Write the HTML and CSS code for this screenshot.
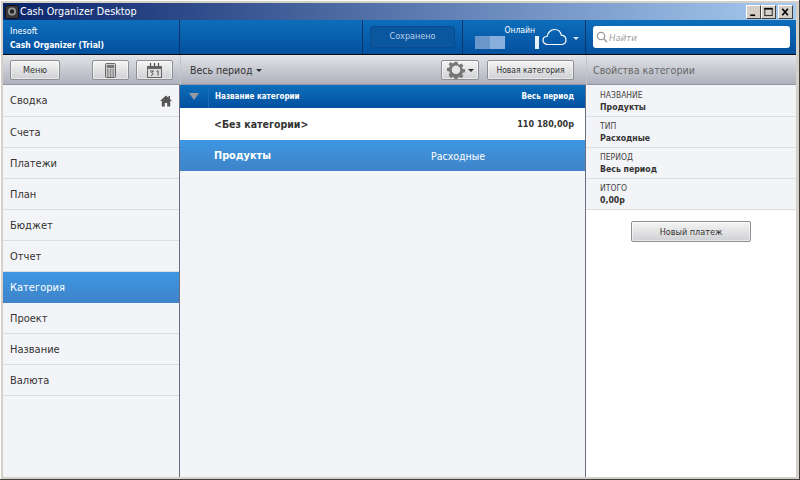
FILE: index.html
```html
<!DOCTYPE html>
<html lang="ru">
<head>
<meta charset="utf-8">
<title>Cash Organizer Desktop</title>
<link rel="stylesheet" href="styles.css">
</head>
<body>
<div class="window">
  <div class="titlebar">
    <svg class="appicon" width="14" height="14" viewBox="0 0 14 14"><rect x="0.5" y="0.5" width="13" height="13" rx="2" fill="#3a3a3a" stroke="#111"/><circle cx="7" cy="6.5" r="4" fill="#999"/><circle cx="7" cy="6.5" r="2.2" fill="#222"/></svg>
    <span class="title-text">Cash Organizer Desktop</span>
    <div class="winbtns">
      <div class="winbtn"><svg width="16" height="14" viewBox="0 0 16 14"><rect x="4" y="10" width="6" height="2" fill="#000"/></svg></div>
      <div class="winbtn"><svg width="16" height="14" viewBox="0 0 16 14"><rect x="3.5" y="2.5" width="9" height="9" fill="none" stroke="#000"/><rect x="3" y="2" width="10" height="2" fill="#000"/></svg></div>
      <div class="winbtn close"><svg width="16" height="14" viewBox="0 0 16 14"><path d="M4 3l7 8M11 3l-7 8" stroke="#000" stroke-width="2"/></svg></div>
    </div>
  </div>

  <div class="header">
    <div class="brand"><div>Inesoft</div><div class="brand-name">Cash Organizer (Trial)</div></div>
    <div class="head-mid"><div class="saved-cell"><div class="saved">Сохранено</div></div></div>
    <div class="status">
      <div class="bars"><span class="online">Онлайн</span><div class="barline"><i class="b1"></i><i class="b2"></i><i class="b3"></i></div></div>
      <svg class="cloud" width="25" height="18" viewBox="0 0 25 18"><path d="M6 16.5C3 16.5 1 14.700 1 12.300 1 10 2.800 8.500 5 8.500 5.700 4.500 9 1.500 12.500 1.500 16 1.500 18.700 4 19.300 7.200 22 7.500 24 9.500 24 12 24 14.700 22 16.500 19 16.500Z" fill="none" stroke="#fff" stroke-width="1.200"/></svg>
      <span class="caret-white"></span>
    </div>
    <div class="searchcell">
      <div class="search">
        <svg width="12" height="12" viewBox="0 0 12 12"><circle cx="5" cy="5" r="3.700" fill="none" stroke="#999" stroke-width="1.200"/><path d="M7.800 7.800L11 11" stroke="#999" stroke-width="1.600"/></svg>
        <span>Найти</span>
      </div>
    </div>
  </div>

  <div class="toolbar">
    <div class="tb-left">
      <button class="btn menu-btn">Меню</button>
      <div class="tb-icons">
        <button class="btn icon-btn"><svg width="11" height="15" viewBox="0 0 11 15"><rect x="0.500" y="0.500" width="10" height="14" rx="1" fill="#ccc" stroke="#666"/><rect x="2" y="2" width="7" height="3" fill="#777"/><path d="M2 7h1.500M4.800 7h1.500M7.500 7H9M2 9h1.500M4.800 9h1.500M7.500 9H9M2 11h1.500M4.800 11h1.500M7.500 11H9M2 13h1.500M4.800 13h1.500M7.500 13H9" stroke="#555" stroke-width="1.200"/></svg></button>
        <button class="btn icon-btn"><svg width="15" height="15" viewBox="0 0 15 15"><rect x="0.500" y="3.500" width="14" height="11" fill="#ddd" stroke="#666"/><rect x="0" y="3" width="15" height="3" fill="#666"/><path d="M3.500 0v4M7.500 0v4M11.500 0v4" stroke="#555" stroke-width="1.200"/><path d="M3 8h3.500l-2 1.500c2 0 2 3-.5 3M9.500 8.500l1.500-.8v5" fill="none" stroke="#555"/></svg></button>
      </div>
    </div>
    <div class="tb-mid">
      <div class="period">Весь период<span class="caret-dark"></span></div>
      <div class="tb-actions">
        <button class="btn gear-btn"><svg width="18" height="18" viewBox="0 0 18 18"><path d="M7.500 1h3l.4 2.300 1.500.6 1.900-1.300 2.100 2.100-1.300 1.900.6 1.500 2.300.4v3l-2.300.4-.6 1.500 1.300 1.900-2.100 2.100-1.900-1.300-1.500.6-.4 2.300h-3l-.4-2.300-1.500-.6-1.900 1.300L1.600 14l1.300-1.900-.6-1.500L0 10.200v-3l2.300-.4.6-1.500L1.600 3.400 3.700 1.300l1.900 1.300 1.500-.6Z" transform="translate(0 -.2)" fill="#777"/><circle cx="9" cy="8.700" r="4.300" fill="#e6e6e6"/></svg><span class="caret-dark"></span></button>
        <button class="btn new-btn">Новая категория</button>
      </div>
    </div>
    <div class="tb-right">Свойства категории</div>
  </div>

  <div class="main">
    <nav class="side">
      <div class="nav-item">Сводка<svg width="12" height="12" viewBox="0 0 12 12"><path d="M6 0.500L0 6h1.800v5.500h3V8h2.400v3.500h3V6H12L10 4.200V1H8.500v1.800Z" fill="#555"/></svg></div>
      <div class="nav-item">Счета</div>
      <div class="nav-item">Платежи</div>
      <div class="nav-item">План</div>
      <div class="nav-item">Бюджет</div>
      <div class="nav-item">Отчет</div>
      <div class="nav-item active">Категория</div>
      <div class="nav-item">Проект</div>
      <div class="nav-item">Название</div>
      <div class="nav-item">Валюта</div>
    </nav>
    <section class="content">
      <div class="thead">
        <div class="th-arrow"><span class="tri"></span></div>
        <div class="th-name">Название категории</div>
        <div class="th-sum">Весь период</div>
      </div>
      <div class="row plain"><span class="r-name">&lt;Без категории&gt;</span><span class="r-sum">110 180,00р</span></div>
      <div class="row selected"><span class="r-name">Продукты</span><span class="r-type">Расходные</span></div>
    </section>
    <aside class="props">
      <div class="prop"><div class="p-label">НАЗВАНИЕ</div><div class="p-val">Продукты</div></div>
      <div class="prop"><div class="p-label">ТИП</div><div class="p-val">Расходные</div></div>
      <div class="prop"><div class="p-label">ПЕРИОД</div><div class="p-val">Весь период</div></div>
      <div class="prop"><div class="p-label">ИТОГО</div><div class="p-val">0,00р</div></div>
      <div class="props-foot"><button class="btn pay-btn">Новый платеж</button></div>
    </aside>
  </div>
</div>
</body>
</html>
```

FILE: styles.css
```css
* { box-sizing: border-box; }
html, body { margin: 0; padding: 0; height: 100%; overflow: hidden; }
body { font-family: "DejaVu Sans Condensed", "Noto Sans", sans-serif; font-size: 11px; color: #333; }

.window {
  width: 800px; height: 480px;
  background: #d4d0c8;
  padding: 3px 3px 2px 3px;
  border-right: 1px solid #404040;
  border-bottom: 1px solid #404040;
  box-shadow: inset 1px 1px 0 #fff;
  display: flex; flex-direction: column;
}

.titlebar {
  height: 17px; flex: none;
  background: linear-gradient(90deg, #0a246a, #a6caf0);
  display: flex; align-items: center;
  padding-left: 2px;
  color: #fff;
}
.appicon { flex: none; }
.title-text { margin-left: 1px; font-size: 10.700px; }
.winbtns { margin-left: auto; display: flex; padding-right: 3px; }
.winbtn {
  width: 15px; height: 14px; overflow: hidden;
  background: #d4d0c8;
  border: 1px solid; border-color: #fff #404040 #404040 #fff;
  display: flex; align-items: center; justify-content: center;
}
.winbtn.close { margin-left: 2px; }

.header {
  height: 35px; flex: none;
  background: linear-gradient(180deg, #0c6ebb, #04509f);
  border-bottom: 1px solid #050a14;
  color: #fff;
  display: grid; grid-template-columns: 177px 283px 123px 1fr;
}
.brand {
  border-right: 1px solid #0a3468;
  padding: 5px 0 0 7px;
  font-size: 9px; line-height: 13px;
}
.brand-name { font-weight: 700; margin-top: 1px; font-size: 8.500px; }
.head-mid { display: flex; justify-content: flex-end; border-right: 1px solid #0a3468; }
.saved-cell { width: 100px; border-left: 1px solid #0a3468; padding: 6px 7px 0 7px; }
.saved {
  height: 22px; line-height: 19px; text-align: center;
  border: 1px solid #0c4a8e; border-radius: 3px;
  background: #0a569f;
  color: #bcd0e8; font-size: 9px;
}
.status { display: flex; align-items: flex-start; border-right: 1px solid #0a3468; padding: 3px 0 0 12px; }
.bars { width: 65px; display: flex; flex-direction: column; align-items: flex-end; }
.online { font-size: 8.500px; line-height: 12px; margin-right: 5px; margin-top: 1px; }
.barline { width: 65px; height: 14px; display: flex; }
.barline i { display: block; height: 13px; }
.b1 { width: 15px; background: #6a98cc; }
.b2 { width: 15px; background: #88aedb; }
.b3 { width: 4px; background: #e8f0f8; margin-left: 30px; }
.cloud { margin: 5px 0 0 2px; flex: none; }
.caret-white { border: 3px solid transparent; border-top: 3px solid #dde8f5; margin: 14px 0 0 6px; }
.searchcell { padding: 6px 6px 0 7px; }
.search {
  height: 22px; background: #fff; border-radius: 3px;
  display: flex; align-items: center; gap: 1px; padding-left: 3px;
  color: #a0a0a0; font-style: italic; font-size: 9.500px;
}

.toolbar {
  height: 30px; flex: none;
  background: linear-gradient(180deg, #e3e4e8, #aeb1bc);
  border-bottom: 1px solid #9296a3;
  display: grid; grid-template-columns: 177px 406px 1fr;
}
.tb-left { display: flex; justify-content: space-between; padding: 5px 7px 0 7px; }
.tb-icons { display: flex; gap: 7px; }
.tb-mid { display: flex; justify-content: space-between; align-items: flex-start; padding: 5px 12px 0 9px; border-left: 1px solid #c2c4cc; }
.tb-actions { display: flex; gap: 8px; }
.tb-right {
  border-left: 1px solid #c2c4cc; padding: 0 0 0 6px;
  line-height: 30px; color: #666; font-size: 10.600px;
}
.period { color: #333; line-height: 21px; font-size: 10.500px; display: flex; align-items: center; }
.caret-dark { display: inline-block; border: 3px solid transparent; border-top: 3px solid #333; margin: 3px 0 0 3px; }

.btn {
  height: 20px; padding: 0;
  font-family: inherit; font-size: 9px; color: #333;
  background: linear-gradient(180deg, #f5f5f5, #cfd0d3);
  border: 1px solid #8e8f94; border-radius: 2px;
  box-shadow: inset 0 0 0 1px rgba(255,255,255,.5);
  display: flex; align-items: center; justify-content: center;
}
.menu-btn { width: 50px; }
.icon-btn { width: 37px; }
.gear-btn { width: 38px; }
.new-btn { width: 87px; font-size: 8.500px; }
.pay-btn { width: 120px; height: 21px; }

.main {
  flex: 1; min-height: 0;
  display: grid; grid-template-columns: 177px 406px 1fr;
  background: #f3f4f7;
}
.side { border-right: 1px solid #6b6d80; }
.nav-item {
  height: 31px; border-bottom: 1px solid #dcdde1;
  padding: 0 7px; display: flex; align-items: center; justify-content: space-between;
  font-size: 11px; color: #333;
}
.nav-item:first-child { height: 32px; }
.nav-item.active, .row.selected {
  background: linear-gradient(180deg, #3d97e2, #3f83c8);
  color: #fff; border-bottom: none;
}
.content { border-right: 1px solid #6b6d80; }
.thead {
  height: 23px; background: linear-gradient(180deg, #0c6ebb, #04509f);
  display: flex; align-items: center; color: #fff;
  font-size: 8px; font-weight: 700;
}
.th-arrow { width: 29px; height: 100%; display: flex; align-items: center; justify-content: center; border-right: 1px solid #1a6cb8; }
.tri { border: 5px solid transparent; border-top: 7px solid #9a9aa0; border-bottom: 0; }
.th-name { margin-left: 6px; }
.th-sum { margin-left: auto; padding-right: 11px; }
.row { height: 32px; display: flex; align-items: center; padding-left: 34px; }
.row.plain { background: #fff; color: #333; font-weight: 700; font-size: 9px; justify-content: space-between; padding-right: 11px; }
.row.plain .r-name { font-size: 10.500px; }
.row.selected { height: 31px; font-weight: 700; font-size: 10.800px; }
.r-type { position: absolute; left: 431px; font-weight: 400; font-size: 10.500px; color: #fff; }

.props { display: flex; flex-direction: column; }
.prop {
  height: 31px; border-bottom: 1px solid #dcdde1;
  padding: 3px 0 0 14px; font-size: 8.700px; line-height: 13px;
}
.prop:first-child { height: 32px; padding-top: 4px; }
.p-label { color: #444; font-size: 8.500px; }
.p-val { font-weight: 700; color: #333; margin-top: -1px; }
.props-foot { flex: 1; background: #fff; padding: 11px 0 0 45px; }
```
